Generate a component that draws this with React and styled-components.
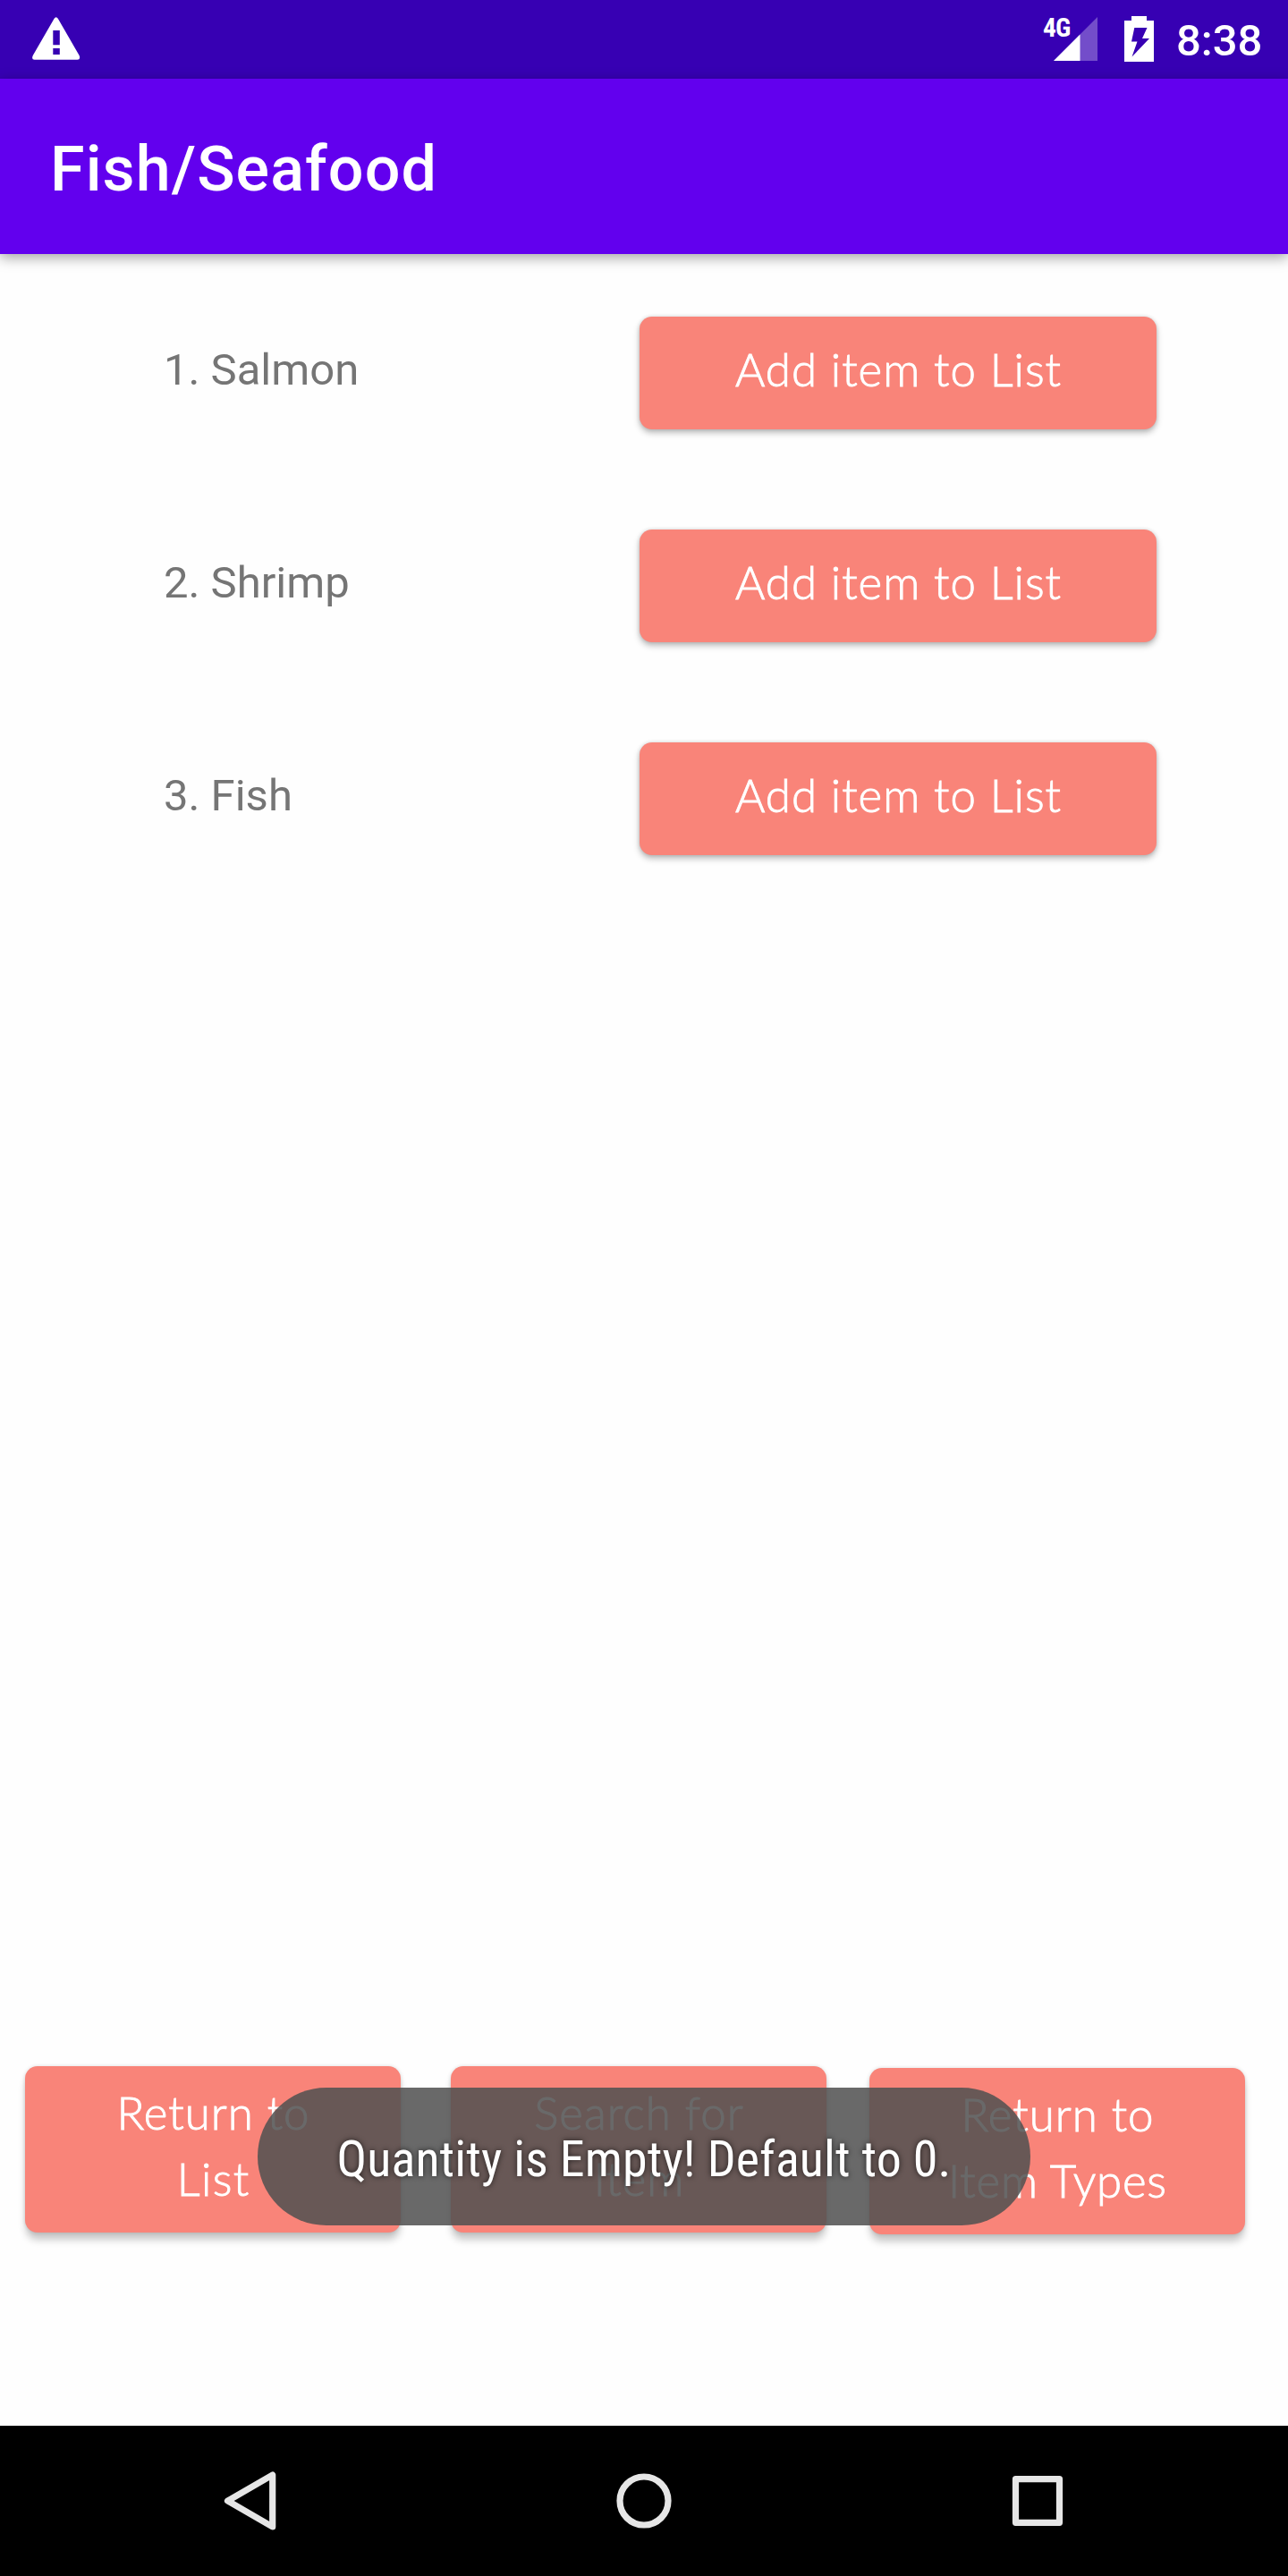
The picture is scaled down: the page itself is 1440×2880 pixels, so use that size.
import React from "react";
import styled, { createGlobalStyle } from "styled-components";

const Global = createGlobalStyle`
  * { box-sizing: border-box; }
  body { margin: 0; background: #fefefe; font-family: Roboto, sans-serif; }
`;

const Screen = styled.div`
  position: relative;
  width: 1440px;
  height: 2880px;
  display: flex;
  flex-direction: column;
  background: #fefefe;
  overflow: hidden;
`;

const StatusBar = styled.div`
  height: 88px;
  flex: none;
  display: flex;
  align-items: flex-start;
  justify-content: space-between;
  padding: 0 28px 0 36px;
  background: #3700b3;
  color: #fff;
`;

const WarningIcon = styled.svg`
  width: 54px;
  height: 48px;
  margin-top: 19px;
`;

const Indicators = styled.div`
  display: flex;
  align-items: flex-start;
`;

const SignalGroup = styled.div`
  display: flex;
  width: 62px;
  margin-top: 18px;
`;

const NetworkLabel = styled.span`
  width: 32px;
  flex: none;
  font-size: 29.5px;
  line-height: 26px;
  font-weight: 700;
  font-stretch: 75%;
  letter-spacing: -1px;
`;

const SignalIcon = styled.svg`
  width: 49px;
  height: 50px;
  margin-left: -20px;
  flex: none;
`;

const BatteryIcon = styled.svg`
  width: 33px;
  height: 51px;
  margin: 18px 25px 0 29px;
`;

const Clock = styled.span`
  width: 97px;
  font-size: 49px;
  line-height: 56px;
  font-weight: 500;
  margin-top: 18px;
`;

const AppBar = styled.header`
  position: relative;
  height: 196px;
  flex: none;
  display: flex;
  align-items: center;
  padding: 6px 56px 0;
  background: #6200ee;
  color: #fff;
  box-shadow: 0 4px 14px rgba(0, 0, 0, 0.36);
`;

const Title = styled.h1`
  margin: 0;
  font-size: 70px;
  line-height: 84px;
  font-weight: 500;
  letter-spacing: 1.1px;
`;

const ItemList = styled.main`
  flex: 1;
  display: flex;
  flex-direction: column;
  gap: 112px;
  padding: 70px 147px 0 183px;
`;

const ItemRow = styled.div`
  display: flex;
  justify-content: space-between;
  height: 126px;
`;

const ItemName = styled.span`
  font-size: 49px;
  line-height: 58px;
  padding-top: 31px;
  color: #757575;
`;

const ActionButton = styled.button`
  width: ${(p) => p.$width}px;
  height: ${(p) => p.$height}px;
  flex: none;
  display: flex;
  justify-content: center;
  align-items: flex-start;
  padding: ${(p) => p.$padTop}px 0 0;
  margin: 0;
  border: 0;
  border-radius: 14px;
  background: #f98479;
  color: #fff;
  text-align: center;
  font-family: "Coming Soon", Lato, sans-serif;
  font-weight: 300;
  font-size: 51px;
  line-height: 74px;
  -webkit-text-stroke: 0.9px currentColor;
  box-shadow: ${(p) =>
    p.$raised
      ? "0 9px 8px -1px rgba(0,0,0,0.22), 0 0 4px rgba(0,0,0,0.14)"
      : "0 4px 7px rgba(0,0,0,0.26), 0 0 4px rgba(0,0,0,0.14)"};
`;

const Line = styled.span`
  display: block;
  white-space: nowrap;
  letter-spacing: ${(p) => p.$track}px;
  margin-right: ${(p) => -p.$track}px;
`;

const Footer = styled.footer`
  height: 402px;
  flex: none;
  display: flex;
  padding: 0 0 0 28px;
`;

const FooterSlot = styled.div`
  margin-right: ${(p) => p.$gap}px;
  padding-top: ${(p) => p.$drop}px;
`;

const Toast = styled.div`
  position: absolute;
  left: 288px;
  top: 2334px;
  width: 864px;
  height: 154px;
  border-radius: 77px;
  display: flex;
  align-items: center;
  justify-content: center;
  padding-top: 6px;
  background: rgba(80, 80, 80, 0.86);
  color: #fff;
`;

const ToastText = styled.span`
  font-size: 56px;
  line-height: 66px;
  white-space: nowrap;
  font-stretch: 75%;
  letter-spacing: 0.1px;
  text-shadow: 0 0 6px rgba(0, 0, 0, 0.7);
`;

const NavBar = styled.nav`
  height: 168px;
  flex: none;
  display: flex;
  align-items: flex-start;
  justify-content: space-between;
  padding: 38px 235px;
  background: #000;
`;

const NavIcon = styled.svg`
  width: 90px;
  height: 90px;
  fill: none;
  stroke: #e6e6e6;
  stroke-width: 7.2;
  stroke-linejoin: round;
`;

const items = ["1. Salmon", "2. Shrimp", "3. Fish"];

const actions = [
  { lines: [["Return to", 1], ["List", 1.4]], gap: 56, drop: 0 },
  { lines: [["Search for", 1.1], ["Item", 1]], gap: 48, drop: 0 },
  { lines: [["Return to", 1], ["Item Types", 0.8]], gap: 0, drop: 2 },
];

export default function App() {
  return (
    <Screen>
      <Global />
      <StatusBar>
        <WarningIcon viewBox="0 0 54 48">
          <path
            fill="#fff"
            fillRule="evenodd"
            d="M24.6 1.8Q26.7-1.2 28.8 1.8L52.6 43Q54.4 47.6 50.5 47.7H2.5Q-1.2 47.6 .8 43ZM23.3 15V31.2H30.8V15ZM23.3 35V42H30.8V35Z"
          />
        </WarningIcon>
        <Indicators>
          <SignalGroup>
            <NetworkLabel>4G</NetworkLabel>
            <SignalIcon viewBox="0 0 49 50">
              <path d="M49 1V50H0Z" fill="#fff" fillOpacity=".3" />
              <path d="M29.5 20.5V50H0Z" fill="#fff" />
            </SignalIcon>
          </SignalGroup>
          <BatteryIcon viewBox="0 0 33 51">
            <path
              fill="#fff"
              fillRule="evenodd"
              d="M8 0H25V5H33V51H0V5H8ZM11.3 13L8 28.5H14.5L8.5 45.5L28 25H20L25.5 13Z"
            />
          </BatteryIcon>
          <Clock>8:38</Clock>
        </Indicators>
      </StatusBar>
      <AppBar>
        <Title>Fish/Seafood</Title>
      </AppBar>
      <ItemList>
        {items.map((name) => (
          <ItemRow key={name}>
            <ItemName>{name}</ItemName>
            <ActionButton $width={578} $height={126} $padTop={22}>
              <Line $track={1}>Add item to List</Line>
            </ActionButton>
          </ItemRow>
        ))}
      </ItemList>
      <Footer>
        {actions.map((a, i) => (
          <FooterSlot key={i} $gap={a.gap} $drop={a.drop}>
            <ActionButton $width={420} $height={186} $padTop={15} $raised>
              <span>
                {a.lines.map(([text, track]) => (
                  <Line key={text} $track={track}>{text}</Line>
                ))}
              </span>
            </ActionButton>
          </FooterSlot>
        ))}
      </Footer>
      <NavBar>
        <NavIcon viewBox="0 0 90 90">
          <path d="M69.7 17V75L19.5 46Z" />
        </NavIcon>
        <NavIcon viewBox="0 0 90 90">
          <circle cx="45" cy="46" r="27" />
        </NavIcon>
        <NavIcon viewBox="0 0 90 90">
          <rect x="20.5" y="21.7" width="49" height="48.6" />
        </NavIcon>
      </NavBar>
      <Toast>
        <ToastText>Quantity is Empty! Default to 0.</ToastText>
      </Toast>
    </Screen>
  );
}
